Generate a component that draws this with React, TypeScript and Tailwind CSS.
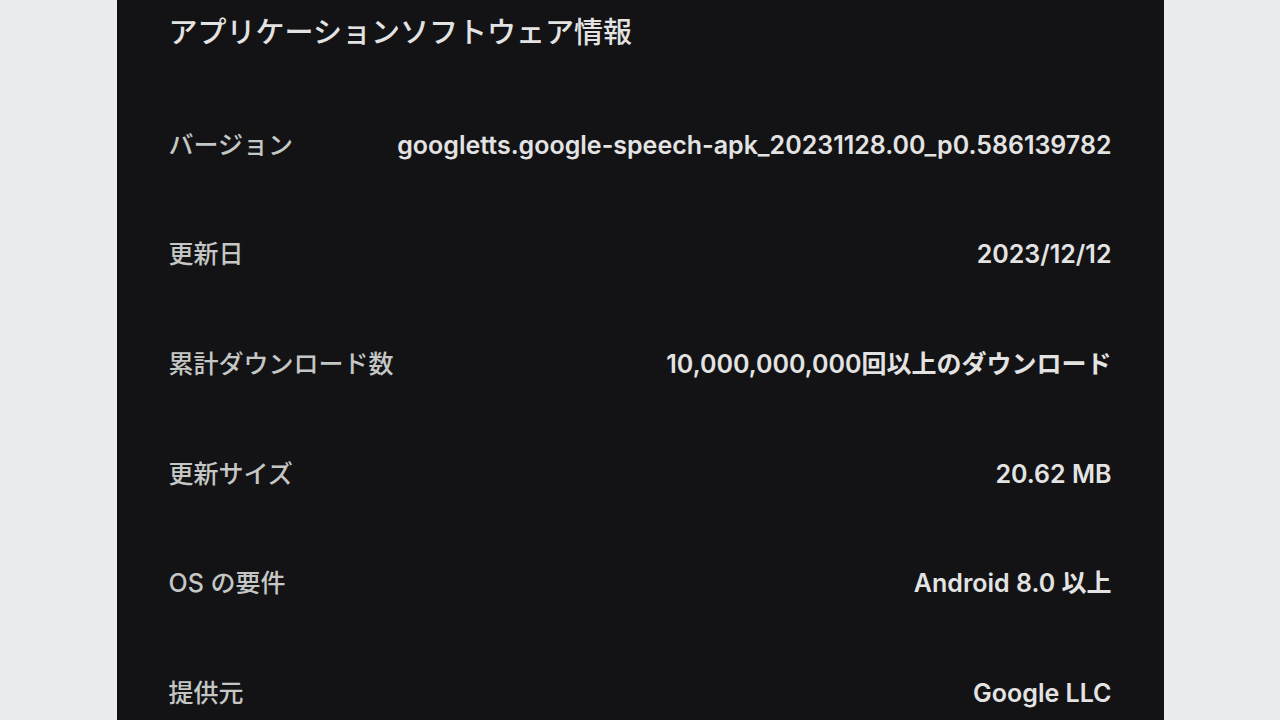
const rows: [string, string][] = [
  ['バージョン', 'googletts.google-speech-apk_20231128.00_p0.586139782'],
  ['更新日', '2023/12/12'],
  ['累計ダウンロード数', '10,000,000,000回以上のダウンロード'],
  ['更新サイズ', '20.62 MB'],
  ['OS の要件', 'Android 8.0 以上'],
  ['提供元', 'Google LLC'],
];

const font = { fontFamily: 'Inter, "Noto Sans CJK JP", sans-serif' };

export default function App() {
  return (
    <div className="flex h-[720px] w-full justify-center overflow-hidden bg-[#ebecef]" style={font}>
      <div className="w-[1047px] bg-[#131315] px-[52px]">
        <div className="h-[90px] pt-[13px]">
          <h1 className="text-[29px] leading-[40px] font-medium text-[#e3e3e3]">
            アプリケーションソフトウェア情報
          </h1>
        </div>
        {rows.map(([label, value]) => (
          <div key={label} className="flex h-[109.6px] items-center justify-between">
            <span className="text-[25px] leading-8 font-medium text-[#c4c7c5]">{label}</span>
            <span className="text-[25px] leading-8 font-semibold text-[#e3e3e3]">{value}</span>
          </div>
        ))}
      </div>
    </div>
  );
}
